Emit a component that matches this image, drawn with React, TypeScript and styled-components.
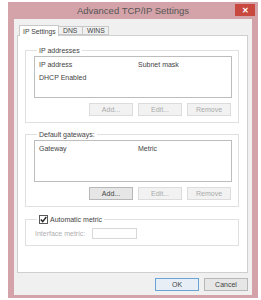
import React from "react";
import styled, { createGlobalStyle } from "styled-components";

const Global = createGlobalStyle`
  html, body { margin: 0; padding: 0; background: #ffffff; }
  body { font-family: "Liberation Sans", Arial, sans-serif; }
`;

const Window = styled.div`
  margin: 2px 0 0 8px;
  width: 250px;
  height: 296px;
  box-sizing: border-box;
  background: #d4a3a9;
  padding: 0 6px 3px 6px;
  display: flex;
  flex-direction: column;
`;

const TitleBar = styled.div`
  height: 17px;
  position: relative;
  display: flex;
  align-items: center;
  justify-content: center;
  color: #555555;
  font-size: 9.5px;
`;

const CloseButton = styled.div`
  position: absolute;
  right: -3px;
  top: 2px;
  width: 20px;
  height: 12px;
  background: #c8473f;
  color: #fff;
  font-size: 8px;
  font-weight: bold;
  display: flex;
  align-items: center;
  justify-content: center;
`;

const Body = styled.div`
  flex: 1;
  background: #f0f0f0;
  padding: 6px 4px 0 3px;
  display: flex;
  flex-direction: column;
`;

const TabStrip = styled.div`
  display: flex;
  align-items: flex-end;
  height: 10px;
  position: relative;
  z-index: 1;
`;

const Tab = styled.div<{ $active?: boolean; $w: number }>`
  width: ${(p) => p.$w}px;
  height: ${(p) => (p.$active ? 11 : 9)}px;
  box-sizing: border-box;
  padding: 0 0 0 ${(p) => (p.$active ? 3 : 4)}px;
  border: 1px solid #c9c9c9;
  border-bottom: ${(p) => (p.$active ? "none" : "1px solid #c9c9c9")};
  margin-left: ${(p) => (p.$active ? 2 : -1)}px;
  background: ${(p) => (p.$active ? "#ffffff" : "#f0f0f0")};
  font-size: 6.8px;
  color: #444444;
  display: flex;
  align-items: center;
  margin-bottom: ${(p) => (p.$active ? -1 : 0)}px;
`;

const Panel = styled.div`
  height: 238px;
  box-sizing: border-box;
  background: #ffffff;
  border: 1px solid #cfcfcf;
  padding: 11px 8px 0 7px;
  display: flex;
  flex-direction: column;
  gap: 8px;
`;

const Group = styled.fieldset`
  margin: 0;
  padding: 2px 6px 6px 8px;
  border: 1px solid #e0e0e0;
  min-width: 0;
  display: flex;
  flex-direction: column;
  gap: 5px;
`;

const Legend = styled.legend`
  padding: 0 2px;
  margin-left: 3px;
  font-size: 7px;
  color: #444444;
  display: flex;
  align-items: center;
  gap: 2px;
`;

const ListBox = styled.div<{ $h: number }>`
  height: ${(p) => p.$h}px;
  box-sizing: border-box;
  border: 1px solid #bdbdbd;
  background: #fff;
  padding: 3px 4px;
  font-size: 7px;
  color: #444444;
  display: flex;
  flex-direction: column;
  gap: 4px;
`;

const ListRow = styled.div`
  display: grid;
  grid-template-columns: 99px 1fr;
  height: 9px;
  align-items: center;
`;

const ButtonRow = styled.div`
  display: flex;
  justify-content: flex-end;
  gap: 5px;
  padding-right: 1px;
`;

const Btn = styled.div<{ $disabled?: boolean; $default?: boolean; $w?: number }>`
  width: ${(p) => p.$w ?? 44}px;
  height: 13px;
  box-sizing: border-box;
  border: 1px solid
    ${(p) => (p.$default ? "#6aa3d5" : p.$disabled ? "#dcdcdc" : "#b8b8b8")};
  background: ${(p) =>
    p.$default ? "#e8eef5" : p.$disabled ? "#f2f2f2" : "#e6e6e6"};
  color: ${(p) => (p.$disabled ? "#aaaaaa" : "#444444")};
  font-size: 7px;
  display: flex;
  align-items: center;
  justify-content: center;
`;

const CheckBox = styled.span`
  width: 9px;
  height: 9px;
  box-sizing: border-box;
  border: 1px solid #5a5a5a;
  background: #fff;
  display: inline-flex;
  align-items: center;
  justify-content: center;
`;

const MetricRow = styled.div`
  display: flex;
  align-items: center;
  padding-left: 1px;
  margin-top: 2px;
  font-size: 7px;
  color: #b0b0b0;
`;

const MetricLabel = styled.span`
  width: 57px;
`;

const Input = styled.div`
  width: 45px;
  height: 11px;
  box-sizing: border-box;
  border: 1px solid #d8d8d8;
  background: #fff;
`;

const Footer = styled.div`
  flex: 1;
  display: flex;
  justify-content: flex-end;
  align-items: center;
  gap: 5px;
`;

export default function App() {
  return (
    <>
      <Global />
      <Window>
        <TitleBar>
          Advanced TCP/IP Settings
          <CloseButton>✕</CloseButton>
        </TitleBar>
        <Body>
          <TabStrip>
            <Tab $active $w={40}>IP Settings</Tab>
            <Tab $w={25}>DNS</Tab>
            <Tab $w={27}>WINS</Tab>
          </TabStrip>
          <Panel>
            <Group>
              <Legend>IP addresses</Legend>
              <ListBox $h={42}>
                <ListRow>
                  <span>IP address</span>
                  <span>Subnet mask</span>
                </ListRow>
                <ListRow>
                  <span>DHCP Enabled</span>
                </ListRow>
              </ListBox>
              <ButtonRow>
                <Btn $disabled>Add...</Btn>
                <Btn $disabled>Edit...</Btn>
                <Btn $disabled>Remove</Btn>
              </ButtonRow>
            </Group>
            <Group>
              <Legend>Default gateways:</Legend>
              <ListBox $h={42}>
                <ListRow>
                  <span>Gateway</span>
                  <span>Metric</span>
                </ListRow>
              </ListBox>
              <ButtonRow>
                <Btn>Add...</Btn>
                <Btn $disabled>Edit...</Btn>
                <Btn $disabled>Remove</Btn>
              </ButtonRow>
            </Group>
            <Group>
              <Legend>
                <CheckBox>
                  <svg width="7" height="7" viewBox="0 0 7 7">
                    <path d="M0.8 3.6 L2.7 5.6 L6.3 1" fill="none" stroke="#222" strokeWidth="1.4" />
                  </svg>
                </CheckBox>
                Automatic metric
              </Legend>
              <MetricRow>
                <MetricLabel>Interface metric:</MetricLabel>
                <Input />
              </MetricRow>
            </Group>
          </Panel>
          <Footer>
            <Btn $default>OK</Btn>
            <Btn>Cancel</Btn>
          </Footer>
        </Body>
      </Window>
    </>
  );
}
